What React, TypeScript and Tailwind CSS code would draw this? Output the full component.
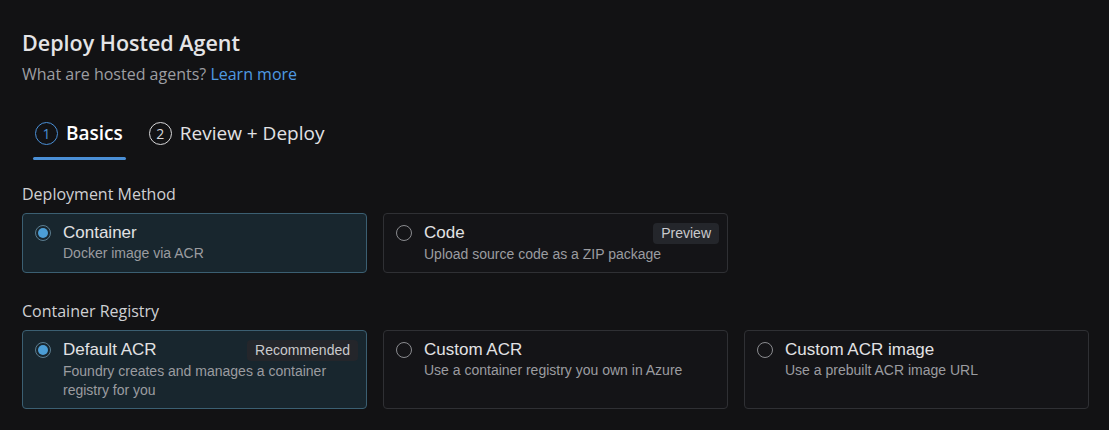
import React from 'react'

const ui = { fontFamily: '"Open Sans", "Liberation Sans", sans-serif' }
const body = { fontFamily: '"Liberation Sans", Arial, sans-serif' }

interface OptionCardProps {
  title: string
  desc: string
  selected?: boolean
  badge?: string
}

const OptionCard: React.FC<OptionCardProps> = ({ title, desc, selected, badge }) => {
  return (
    <div
      className={
        selected
          ? 'flex gap-3 rounded-[4px] border border-[#3b5f72] bg-[#18262e] pl-3 pr-2 pt-[9px] pb-2'
          : 'flex gap-3 rounded-[4px] border border-[#2f3034] bg-[#141417] pl-3 pr-2 pt-[9px] pb-2'
      }
      style={body}
    >
      <div className="pt-[2px]">
        {selected ? (
          <div className="flex h-4 w-4 items-center justify-center rounded-full border-[1.5px] border-[#5b7d90]">
            <div className="h-[10px] w-[10px] rounded-full bg-[#4c9ed6]" />
          </div>
        ) : (
          <div className="h-4 w-4 rounded-full border-[1.5px] border-[#8a8b8f]" />
        )}
      </div>
      <div className="flex-1">
        <div className="flex items-start justify-between">
          <div className="text-[17px] leading-5 text-[#e2e2e4]">{title}</div>
          {badge && (
            <span className="rounded-[4px] bg-[#24262b] px-2 py-[2px] text-[14px] leading-[17px] text-[#c9cacd]">
              {badge}
            </span>
          )}
        </div>
        <div className="mt-[1px] pr-6 text-[14px] leading-[19px] text-[#9b9ca0]">{desc}</div>
      </div>
    </div>
  )
}

const StepCircle: React.FC<{ n: number; active?: boolean }> = ({ n, active }) => (
  <span
    className={
      active
        ? 'flex h-[23px] w-[23px] items-center justify-center rounded-full border-[1.5px] border-[#4a8fd6] text-[14px] text-[#4a8fd6]'
        : 'flex h-[23px] w-[23px] items-center justify-center rounded-full border-[1.5px] border-[#d8d8da] text-[14px] text-[#d8d8da]'
    }
  >
    {n}
  </span>
)

export default function App() {
  return (
    <div className="min-h-[430px] w-full bg-[#121214] px-[22px] pt-[29px]" style={ui}>
      <h1 className="text-[21.5px] font-semibold leading-[28px] text-[#e4e4e6]">Deploy Hosted Agent</h1>
      <p className="mt-[7px] text-[16px] leading-5 text-[#9d9ea2]">
        What are hosted agents? <span className="text-[#4f9ae2]">Learn more</span>
      </p>

      {/* Steps */}
      <div className="mt-[35px] flex h-[28px] items-center gap-[26px] pl-[13px]">
        <div className="relative flex items-center gap-2">
          <StepCircle n={1} active />
          <span className="text-[19px] leading-[28px] font-semibold text-white">Basics</span>
          <div className="absolute -bottom-[13px] -left-[2px] -right-[3px] h-[3px] rounded-full bg-[#4a8fd6]" />
        </div>
        <div className="flex items-center gap-2">
          <StepCircle n={2} />
          <span className="text-[19px] leading-[28px] text-[#e2e2e4]">Review + Deploy</span>
        </div>
      </div>

      {/* Deployment method */}
      <div className="mt-[36px] text-[16px] leading-[22px] text-[#cfd0d3]">Deployment Method</div>
      <div className="mt-[8px] grid w-[1067px] grid-cols-3 gap-4">
        <OptionCard title="Container" desc="Docker image via ACR" selected />
        <OptionCard title="Code" desc="Upload source code as a ZIP package" badge="Preview" />
      </div>

      {/* Container registry */}
      <div className="mt-[27px] text-[16px] leading-[22px] text-[#cfd0d3]">Container Registry</div>
      <div className="mt-[8px] grid w-[1067px] grid-cols-3 gap-4">
        <OptionCard
          title="Default ACR"
          desc="Foundry creates and manages a container registry for you"
          badge="Recommended"
          selected
        />
        <OptionCard title="Custom ACR" desc="Use a container registry you own in Azure" />
        <OptionCard title="Custom ACR image" desc="Use a prebuilt ACR image URL" />
      </div>
    </div>
  )
}
